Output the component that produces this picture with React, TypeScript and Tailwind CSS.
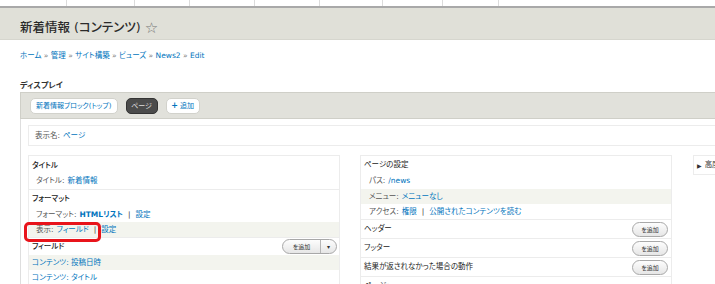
import React from "react";

const Sep = () => <span className="text-[#444] px-[5px]">|</span>;

function AddBtn({ split = false }: { split?: boolean }) {
  return (
    <div className="flex h-[15px] items-stretch rounded-full border border-[#a8a8a8] bg-gradient-to-b from-[#fdfdfd] to-[#e6e6e6] text-[6px] font-normal text-[#333] shadow-[0_1px_0_#fff]">
      <span className={split ? "flex items-center justify-center w-[37px]" : "flex items-center justify-center w-[34px]"}>を追加</span>
      {split && (
        <span className="flex items-center justify-center w-[16px] border-l border-[#b5b5b5] text-[6px]">▾</span>
      )}
    </div>
  );
}

export default function App() {
  return (
    <div className="relative w-[715px] h-[284px] overflow-hidden bg-white text-[#333] font-['DejaVu_Sans','Noto_Sans_CJK_JP',sans-serif] [font-feature-settings:'palt']">
      {/* top strip */}
      <div className="flex h-[6px]">
        <div className="w-[67px] border-r border-[#dcdcdc]" />
        <div className="w-[68px] border-r border-[#dcdcdc]" />
        <div className="w-[55px] border-r border-[#dcdcdc]" />
        <div className="w-[65px] border-r border-[#dcdcdc]" />
        <div className="w-[65px] border-r border-[#dcdcdc]" />
        <div className="w-[63px] border-r border-[#dcdcdc]" />
        <div className="w-[60px] border-r border-[#dcdcdc]" />
        <div className="w-[56px] border-r border-[#dcdcdc]" />
      </div>
      <div className="h-[2px] bg-[#a9a9a9]" />
      <div className="h-[32px] bg-[#e0e0d8] border-b border-[#d6d6ce] pl-[20px] pt-[12px]">
        <h1 className="text-[12.5px] leading-[16px] font-medium text-[#2a2a2a] flex items-center">
          新着情報 (コンテンツ)
          <span className="ml-[4px] text-[15px] leading-[16px] text-[#777] font-normal">☆</span>
        </h1>
      </div>

      {/* breadcrumb */}
      <div className="pl-[20px] mt-[11px] text-[7.5px] leading-[10px] text-[#0074bd]">
        ホーム <span className="text-[#777]">»</span> 管理 <span className="text-[#777]">»</span> サイト構築 <span className="text-[#777]">»</span> ビューズ <span className="text-[#777]">»</span> News2 <span className="text-[#777]">»</span> Edit
      </div>

      <div className="pl-[20px] mt-[20px] text-[8px] leading-[10px] font-bold text-[#333]">ディスプレイ</div>

      {/* display panel */}
      <div className="ml-[20px] mt-[1px] w-[760px]">
        <div className="h-[27px] bg-[#e1e1db] border border-[#cfcfc8] flex items-start pt-[5px] pl-[9px] gap-[8px]">
          <div className="h-[16px] px-[5px] rounded-[5px] bg-white border border-[#d2d2cc] flex items-center text-[7px] text-[#0074bd]">
            新着情報ブロック(トップ)
          </div>
          <div className="h-[16px] w-[32px] rounded-[5px] bg-[#4b4b4b] border border-[#333] flex items-center justify-center text-[7px] text-[#ddd]">
            ページ
          </div>
          <div className="h-[16px] w-[34px] rounded-[5px] bg-white border border-[#d2d2cc] flex items-center justify-center text-[7px] text-[#0074bd]">
            <span className="font-bold mr-[2px] text-[8px]">+</span>追加
          </div>
        </div>

        <div className="border-l border-[#dedede] pl-[7px] pt-[6px] pb-[20px]">
          <div className="h-[21px] border border-[#ececec] flex items-center pl-[6px] text-[7.5px] text-[#555]">
            表示名: <span className="ml-[3px] text-[#0074bd]">ページ</span>
          </div>

          <div className="mt-[9px] flex items-start gap-[20px]">
            {/* left column */}
            <div className="w-[312px] border border-[#ececec] text-[7.5px]">
              <div className="h-[17px] flex items-center pl-[3px] pt-[2px] font-medium text-[#222]">タイトル</div>
              <div className="h-[16px] flex items-center pl-[7px] text-[#555]">
                タイトル: <span className="ml-[3px] text-[#0074bd]">新着情報</span>
              </div>
              <div className="border-t border-[#ececec] h-[18px] flex items-center pl-[3px] font-medium text-[#222]">フォーマット</div>
              <div className="h-[15px] flex items-center pl-[7px] text-[#555]">
                フォーマット: <span className="ml-[3px] text-[#0074bd] font-semibold">HTMLリスト</span>
                <Sep />
                <span className="text-[#0074bd]">設定</span>
              </div>
              <div className="h-[15px] flex items-center pl-[7px] bg-[#f3f4ee] text-[#555]">
                表示: <span className="ml-[3px] text-[#0074bd]">フィールド</span>
                <Sep />
                <span className="text-[#0074bd]">設定</span>
              </div>
              <div className="border-t border-[#ececec] h-[18px] flex items-center justify-between pl-[3px] pr-[2px] font-medium text-[#222]">
                <span>フィールド</span>
                <AddBtn split />
              </div>
              <div className="h-[15px] flex items-center pl-[3px] bg-[#f3f4ee] text-[#0074bd]">コンテンツ: 投稿日時</div>
              <div className="h-[15px] flex items-center pl-[3px] text-[#0074bd]">コンテンツ: タイトル</div>
            </div>

            {/* right column */}
            <div className="w-[312px] border border-[#ececec] text-[7.5px]">
              <div className="h-[17px] flex items-center pl-[3px] pt-[1px] text-[#222]">ページの設定</div>
              <div className="h-[16px] flex items-center pl-[8px] text-[#555]">
                パス: <span className="ml-[3px] text-[#0074bd]">/news</span>
              </div>
              <div className="h-[15px] flex items-center pl-[8px] bg-[#f3f4ee] text-[#555]">
                メニュー: <span className="ml-[3px] text-[#0074bd]">メニューなし</span>
              </div>
              <div className="h-[15px] flex items-center pl-[8px] text-[#555]">
                アクセス: <span className="ml-[3px] text-[#0074bd]">権限</span>
                <Sep />
                <span className="text-[#0074bd]">公開されたコンテンツを読む</span>
              </div>
              <div className="border-t border-[#ececec] h-[19px] flex items-center justify-between pl-[3px] pr-[3px] text-[#222]">
                <span>ヘッダー</span>
                <AddBtn />
              </div>
              <div className="border-t border-[#ececec] h-[19px] flex items-center justify-between pl-[3px] pr-[3px] text-[#222]">
                <span>フッター</span>
                <AddBtn />
              </div>
              <div className="border-t border-[#ececec] h-[19px] flex items-center justify-between pl-[3px] pr-[3px] text-[#222]">
                <span>結果が返されなかった場合の動作</span>
                <AddBtn />
              </div>
              <div className="border-t border-[#ececec] h-[19px] flex items-center pl-[3px] text-[#222]">
                <span>ページャー</span>
              </div>
            </div>

            {/* far right */}
            <div className="ml-[1px] w-[80px] h-[20px] border border-[#ececec] flex items-center pl-[3px] text-[7.5px] text-[#333]">
              <span className="text-[6px] mr-[3px]">▶</span>高度な設定
            </div>
          </div>
        </div>
      </div>

      {/* red highlight */}
      <div className="absolute left-[24px] top-[222px] w-[77px] h-[20px] border-[3px] border-[#e8141b] rounded-[5px]" />
    </div>
  );
}
